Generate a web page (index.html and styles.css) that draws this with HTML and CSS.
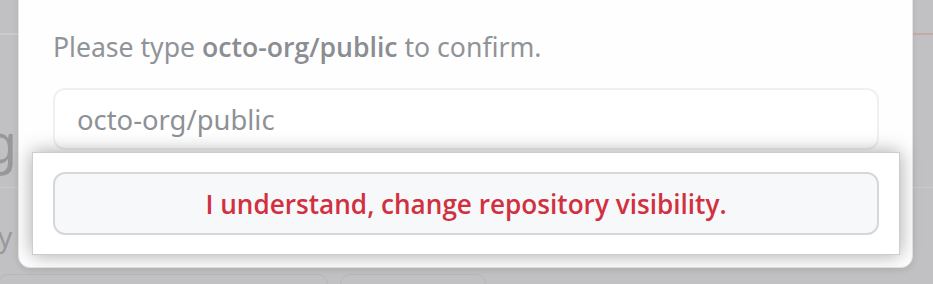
FILE: index.html
```html
<!DOCTYPE html>
<html lang="en">
<head>
  <meta charset="UTF-8" />
  <title>Change repository visibility</title>
  <link rel="stylesheet" href="styles.css">
</head>
<body>
  <!-- page behind the dialog, dimmed -->
  <div class="backdrop">
    <div class="side side-left">
      <div class="strip strip-top"></div>
      <div class="strip strip-heading"><span class="ghost-g">g</span></div>
      <div class="strip strip-row"><span class="ghost-y">y</span></div>
    </div>
    <div class="side side-right">
      <div class="strip strip-top red"></div>
      <div class="strip strip-heading"></div>
    </div>
  </div>
  <div class="ghost-buttons">
    <div class="ghost-btn wide"></div>
    <div class="ghost-btn"></div>
  </div>

  <div class="dialog">
    <p class="confirm-text">Please type <strong>octo-org/public</strong> to confirm.</p>
    <input class="confirm-input" type="text" placeholder="octo-org/public" />
    <div class="spotlight">
      <button class="btn-danger" type="button">I understand, change repository visibility.</button>
    </div>
  </div>
</body>
</html>
```

FILE: styles.css
```css
body {
  margin: 0;
  width: 933px;
  height: 284px;
  overflow: hidden;
  position: relative;
  background-color: #c1c1c3;
  font-family: "Noto Sans", "Open Sans", sans-serif;
}

/* dimmed page behind the modal */
.backdrop {
  display: flex;
  justify-content: space-between;
  height: 268px;
}

.side {
  width: 20px;
  overflow: hidden;
}

.side-left {
  width: 18px;
}

.strip {
  box-sizing: border-box;
}

.strip-top {
  height: 35px;
  border-bottom: 2px solid #cbcbcd;
}

.strip-top.red {
  border-bottom-color: #c6a9a7;
}

.strip-heading {
  height: 153px;
  padding-top: 87px;
  border-bottom: 1px solid #cacacc;
}

.strip-row {
  padding-top: 33px;
}

.ghost-g {
  display: block;
  margin-left: -16px;
  font-size: 54px;
  line-height: 40px;
  color: #98989b;
}

.ghost-y {
  display: block;
  margin-left: -2px;
  font-size: 28px;
  line-height: 30px;
  color: #98989b;
}

.ghost-buttons {
  display: flex;
  gap: 12px;
  height: 16px;
  padding-top: 6px;
  overflow: hidden;
  box-sizing: border-box;
}

.ghost-btn {
  flex-shrink: 0;
  width: 144px;
  height: 30px;
  border: 1px solid #b6b6b8;
  border-radius: 10px;
}

.ghost-btn.wide {
  width: 328px;
  margin-left: -2px;
}

/* modal */
.dialog {
  position: absolute;
  left: 18px;
  top: -20px;
  width: 853px;
  padding: 47px 20px 12px 20px;
  background: #fefefe;
  border: 1px solid #e4e4e6;
  border-radius: 12px;
  box-shadow: 0 2px 6px rgba(0, 0, 0, 0.08);
}

.confirm-text {
  margin: 0 0 0 14px;
  font-size: 26.6px;
  line-height: 38px;
  color: #909397;
}

.confirm-text strong {
  font-family: "Open Sans", "Noto Sans", sans-serif;
  font-weight: 600;
  color: #8a8d91;
}

.confirm-input {
  display: block;
  box-sizing: border-box;
  width: 826px;
  height: 62px;
  margin: 22px 0 0 14px;
  padding: 0 22px;
  border: 2px solid #f0f0f1;
  border-radius: 12px;
  background: #fff;
  font-family: inherit;
  font-size: 27.4px;
  color: #8c8f93;
}

.confirm-input::placeholder {
  color: #8e9195;
}

/* highlighted area around the button */
.spotlight {
  position: relative;
  box-sizing: border-box;
  width: 868px;
  margin: 2px 0 0 -7px;
  padding: 19px 20px;
  background: #fff;
  border: 1px solid #cdcdcf;
  box-shadow: 0 0 18px rgba(0, 0, 0, 0.35);
}

.btn-danger {
  display: block;
  width: 826px;
  height: 63px;
  border: 2px solid #d6d7da;
  border-radius: 12px;
  background: #f7f8fa;
  font-family: "Open Sans", "Noto Sans", sans-serif;
  font-size: 26.15px;
  font-weight: 600;
  color: #d1313f;
}
```
